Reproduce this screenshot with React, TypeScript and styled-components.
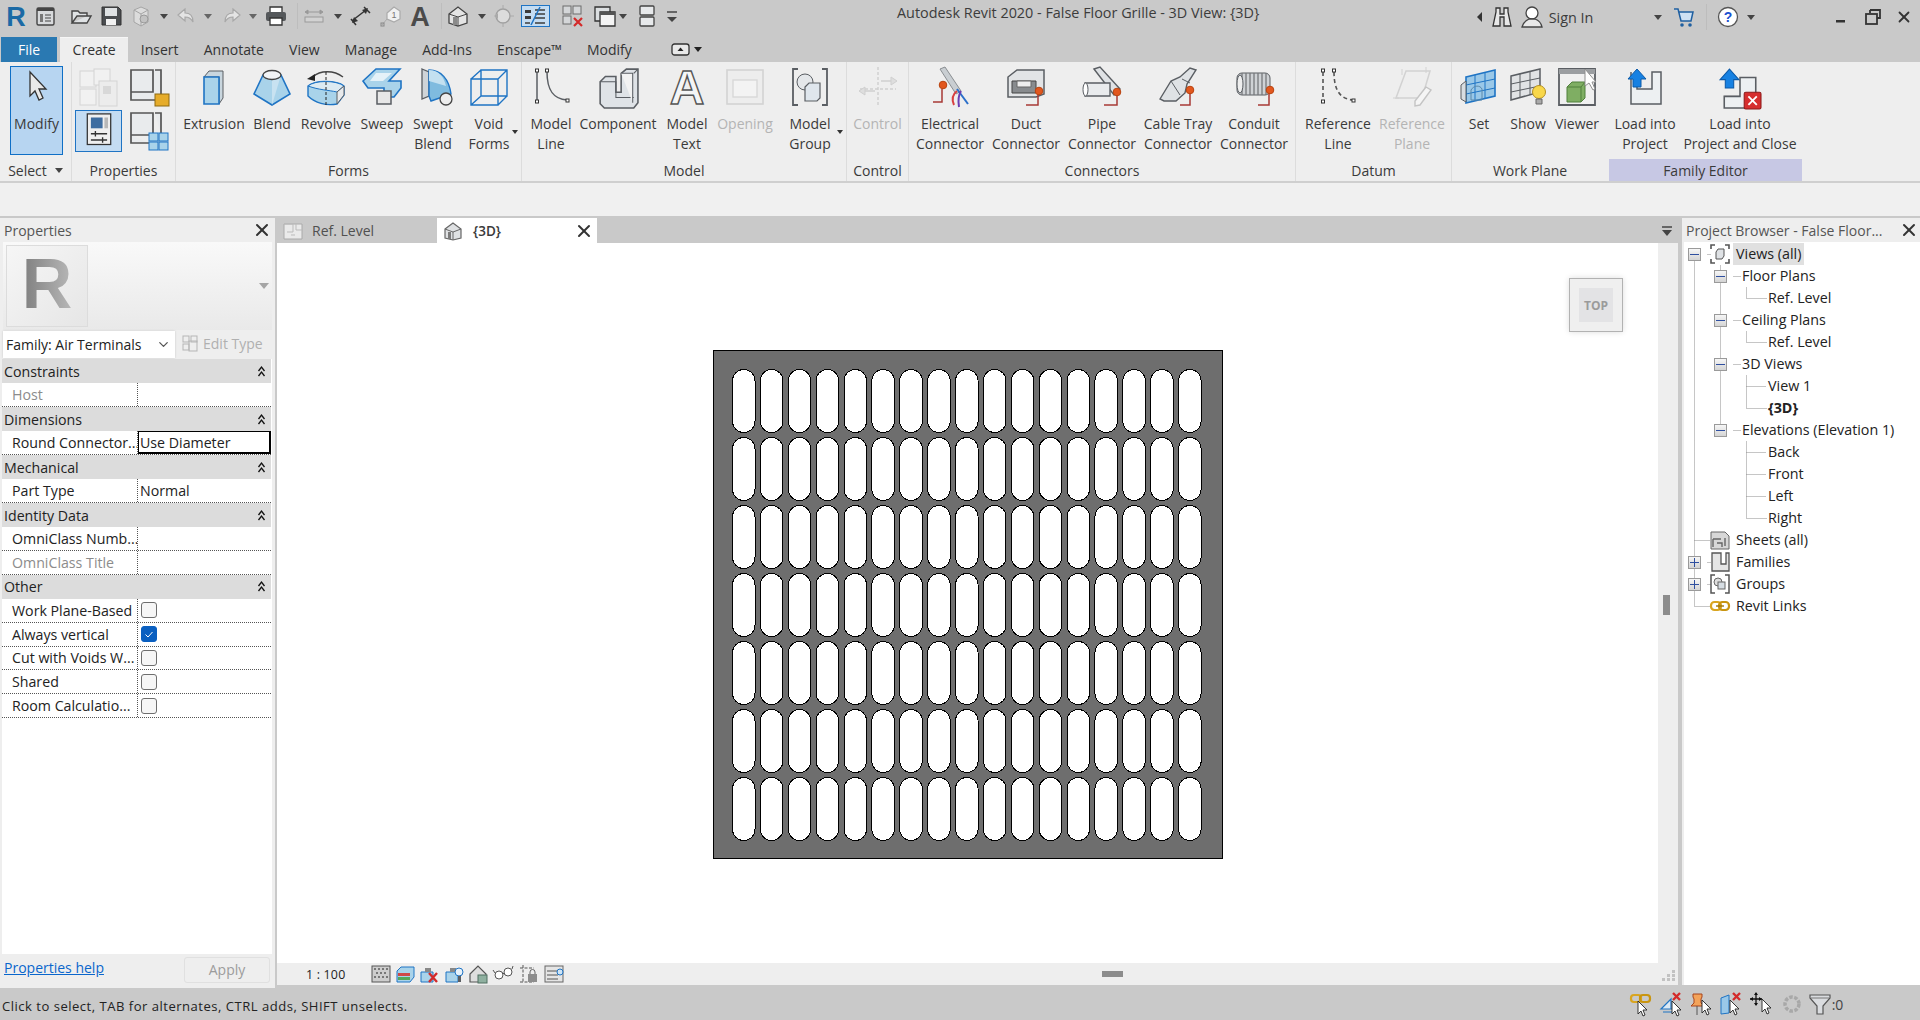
import React from "react";
import styled, { createGlobalStyle } from "styled-components";
import { ChevronDown, X } from "lucide-react";

const Global = createGlobalStyle`
  html, body { margin: 0; padding: 0; background: #c9c9c9; overflow: hidden; }
  * { box-sizing: border-box; }
  body { font-family: "Open Sans", "Noto Sans", "Liberation Sans", sans-serif; font-size: 14px; color: #2b2b2b; }
`;

/* ---------- page shell ---------- */
const Page = styled.div`width: 1920px; height: 1020px; display: flex; flex-direction: column; overflow: hidden; background: #c9c9c9;`;
const TitleBar = styled.header`height: 37px; display: flex; align-items: flex-start; flex: none; position: relative;`;
const IconRow = styled.div<{ $h?: number }>`display: flex; align-items: center; flex: none; height: ${p => p.$h ?? 32}px;`;
const Slot = styled.div<{ $w: number; $ml: number }>`width: ${p => p.$w}px; margin-left: ${p => p.$ml}px; flex: none; display: flex; align-items: center; justify-content: center;`;
const Title = styled.div`margin-left: 218px; font-size: 14.4px; line-height: 26px; color: #3c3c3c; white-space: nowrap;`;
const TitleRight = styled.div`margin-left: auto; width: 450px; flex: none; padding-top: 1px;`;
const SignIn = styled.span`font-size: 14.4px; color: #3c3c3c; white-space: nowrap;`;
const Divider = styled.div`width: 1px; height: 26px; background: #bdbdbd;`;
const TabRow = styled.nav`height: 25px; display: flex; flex: none; padding-left: 1px;`;
const FileTab = styled.div`width: 56px; margin-right: 3px; padding-bottom: 1px; background: #2a79b2; color: #fff; display: flex; align-items: center; justify-content: center;`;
const RibbonTab = styled.div<{ $active?: boolean }>`padding: 0 12.6px 2px; display: flex; align-items: center; color: #333; white-space: nowrap;
  background: ${p => (p.$active ? "#eeeeee" : "transparent")}; border-top: 1px solid ${p => (p.$active ? "#f6f6f6" : "transparent")};`;
const TabTool = styled.div`margin-left: 27px; display: flex; align-items: center; gap: 4px;`;

const Ribbon = styled.section`height: 121px; flex: none; display: flex; background: #eeeeee; border-bottom: 2px solid #cfcfcf;`;
const Panel = styled.div<{ $w: number; $last?: boolean }>`width: ${p => p.$w}px; flex: none; display: flex; flex-direction: column; height: 119px;
  border-right: 1px solid ${p => (p.$last ? "transparent" : "#dcdcdc")};`;
const PanelBody = styled.div<{ $pad?: number }>`height: 97px; display: flex; padding-left: ${p => p.$pad ?? 0}px;`;
const PanelLabel = styled.div<{ $hl?: boolean }>`height: 22px; display: flex; align-items: center; justify-content: center; gap: 8px; color: #3a3a3a; background: ${p => (p.$hl ? "#c7c8e4" : "transparent")};`;
const RButton = styled.div<{ $w: number; $off?: boolean }>`width: ${p => p.$w}px; flex: none; position: relative; display: flex; flex-direction: column; align-items: center; color: ${p => (p.$off ? "#b4b4b4" : "#3a3a3a")};`;
const IconWell = styled.div`height: 52px; padding-top: 5px; flex: none;`;
const RLabel = styled.div`line-height: 19.5px; text-align: center; white-space: nowrap;`;
const SplitCaret = styled.div<{ $r: number }>`position: absolute; top: 68px; right: ${p => p.$r}px; width: 0; height: 0; border: 3px solid transparent; border-top: 4px solid #333;`;
const ModifyButton = styled.div`width: 53px; height: 89px; margin: 4px 0 0 10px; background: #b7d5f1; border: 1px solid #0f6fc6; display: flex; flex-direction: column; align-items: center; padding-top: 4px; color: #3a3a3a;`;
const ModifyText = styled.div`margin-top: 13px;`;
const SmallGrid = styled.div`margin: 3px 0 0 3px; display: grid; grid-template-columns: 47px 47px; grid-template-rows: 45px 42px; gap: 0 3px;`;
const SmallCell = styled.div<{ $on?: boolean }>`display: flex; align-items: center; justify-content: center; background: ${p => (p.$on ? "#c4dcf2" : "transparent")}; border: 1px solid ${p => (p.$on ? "#1f74c4" : "transparent")};`;
const Caret = styled.span<{ $c?: string }>`display: inline-block; width: 0; height: 0; border: 4px solid transparent; border-top: 5px solid ${p => p.$c ?? "#444"}; border-bottom: 0;`;
const RibbonGap = styled.div`height: 33px; flex: none; background: #f0f0f0;`;

const Workspace = styled.main`flex: 1; min-height: 0; display: flex; padding-top: 2px; background: #c9c9c9;`;

/* ---------- properties ---------- */
const PropsPanel = styled.aside`width: 275px; flex: none; background: #eeeeee; display: flex; flex-direction: column; margin-right: 2px;`;
const DockHeader = styled.div<{ $pad: number }>`height: 24px; flex: none; display: flex; align-items: center; justify-content: space-between; padding: 0 ${p => p.$pad}px 0 4px; color: #555;`;
const TypeSelector = styled.div`height: 88px; margin: 0 3px 0 3px; flex: none; display: flex; align-items: center; justify-content: space-between; padding: 0 3px; background: linear-gradient(#f9f9f9, #e9e9e9);`;
const Thumb = styled.div`width: 82px; height: 82px; border: 1px solid #dcdcdc; background: linear-gradient(135deg, #f6f6f6, #e6e6e6); display: flex; align-items: center; justify-content: center;`;
const TypeCaret = styled.div`width: 0; height: 0; border: 5px solid transparent; border-top: 6px solid #a5a5a5; border-bottom: 0;`;
const FamilyRow = styled.div`height: 29px; flex: none; display: flex; align-items: center; padding: 0 0 0 3px;`;
const Combo = styled.div`width: 172px; height: 27px; background: #fff; box-shadow: 0 0 2px #c8c8c8; display: flex; align-items: center; justify-content: space-between; padding: 0 4px 0 3px; color: #222;`;
const EditType = styled.div`margin: -3px 0 0 7px; display: flex; align-items: center; gap: 5px; color: #b0b0b0;`;
const PropBody = styled.div`flex: 1; margin: 0 0 0 2px; background: #fff; width: 270px; font-size: 14.2px;`;
const GroupHead = styled.div`height: 24.2px; width: 269px; background: #dcdcdc; padding: 0 6px 0 2px; display: flex; align-items: center; justify-content: space-between; color: #222;`;
const PropRow = styled.div`height: 23.8px; width: 269px; display: grid; grid-template-columns: 136px 133px; border-bottom: 1px dotted #555;`;
const PropName = styled.div<{ $off?: boolean }>`padding-left: 10px; display: flex; align-items: center; white-space: nowrap; overflow: hidden; border-right: 1px dotted #555; color: ${p => (p.$off ? "#8c8c8c" : "#222")};`;
const PropValue = styled.div<{ $sel?: boolean }>`padding-left: ${p => (p.$sel ? 1 : 2)}px; display: flex; align-items: center; color: #222; border: ${p => (p.$sel ? "1px solid #000" : "0")}; ${p => (p.$sel ? "border-width: 1px 2px 2px 1px;" : "")}`;
const Check = styled.div<{ $on?: boolean }>`width: 16px; height: 16px; margin-left: 1px; border-radius: 3px; display: flex; align-items: center; justify-content: center;
  background: ${p => (p.$on ? "#0a5fc0" : "#f6f6f6")}; border: 1px solid ${p => (p.$on ? "#0a5fc0" : "#6e6e6e")};`;
const PropFooter = styled.div`height: 34px; flex: none; display: flex; align-items: center; justify-content: space-between; padding: 0 5px 0 4px;`;
const HelpLink = styled.a`color: #0a66cc; text-decoration: underline; margin-top: -7px;`;
const ApplyButton = styled.div`width: 86px; height: 26px; margin-top: -3px; border: 1px solid #e0e0e0; border-radius: 3px; display: flex; align-items: center; justify-content: center; color: #9c9c9c;`;

/* ---------- view ---------- */
const ViewArea = styled.section`width: 1401px; flex: none; display: flex; flex-direction: column; margin-bottom: 3px;`;
const ViewTabs = styled.div`height: 25px; flex: none; display: flex; align-items: stretch; background: #c9c9c9;`;
const ViewTab = styled.div<{ $active?: boolean; $w: number; $ml?: number }>`width: ${p => p.$w}px; margin-left: ${p => p.$ml ?? 0}px; display: flex; align-items: center; background: ${p => (p.$active ? "#fff" : "transparent")}; padding-left: 6px; color: ${p => (p.$active ? "#3a3a3a" : "#505050")};`;
const TabName = styled.span<{ $bold?: boolean }>`margin-left: ${p => (p.$bold ? 10 : 9)}px; font-weight: ${p => (p.$bold ? 600 : 400)}; font-size: ${p => (p.$bold ? 13.5 : 14)}px;`;
const TabClose = styled.div`margin-left: auto; margin-right: 3px; display: flex;`;
const TabsMenu = styled.div`margin-left: auto; margin-right: 5px; align-self: center; display: flex;`;
const ViewBody = styled.div`flex: 1; min-height: 0; display: flex;`;
const CanvasColumn = styled.div`flex: 1; min-width: 0; display: flex; flex-direction: column;`;
const Canvas = styled.div`flex: 1; position: relative; background: #fff; display: flex; justify-content: center; padding-top: 107px;`;
const ViewCube = styled.div`position: absolute; left: 1292px; top: 35px; width: 54px; height: 54px; border: 1px solid #b2b2b2; background: #efefef; box-shadow: 0 0 6px #dedede; display: flex; align-items: center; justify-content: center;`;
const CubeFace = styled.div`width: 34px; height: 34px; background: #e3e3e5; color: #9b9b9b; font-size: 12px; font-weight: 700; display: flex; align-items: center; justify-content: center;`;
const ViewBar = styled.div`height: 22px; flex: none; background: #eeeeee; position: relative; display: flex; align-items: center;`;
const ScaleText = styled.div`position: absolute; left: 29px; font-size: 12.4px; color: #222; white-space: nowrap; letter-spacing: 0.2px;`;
const HThumb = styled.div`margin-left: auto; margin-right: 535px; width: 21px; height: 6px; background: #8c8c8c;`;
const ScrollColumn = styled.div`width: 20px; flex: none; background: #eeeeee; display: flex; flex-direction: column; align-items: center; padding-bottom: 3px;`;
const VThumb = styled.div`margin: 352px 3px 0 0; width: 7px; height: 20px; background: #8c8c8c;`;
const Grip = styled.div`margin-top: auto; align-self: flex-end; margin-right: 3px; display: flex;`;

/* ---------- browser ---------- */
const BrowserPanel = styled.aside`width: 238px; margin-left: 4px; flex: none; background: #eeeeee; display: flex; flex-direction: column; margin-bottom: 3px;`;
const Tree = styled.div`flex: 1; margin-left: 2px; background: #fff; position: relative; padding-top: 1px; font-size: 14.3px;`;
const TreeLines = styled.svg`position: absolute; left: 0; top: 0;`;
const TreeRow = styled.div<{ $pad: number }>`height: 22px; display: flex; align-items: center; padding-left: ${p => p.$pad}px; position: relative; color: #222; white-space: nowrap;`;
const ExpBox = styled.div`width: 13px; height: 13px; flex: none; border: 1px solid #9a9a9a; background: linear-gradient(#f6f6f6, #d4d4d4); display: flex; align-items: center; justify-content: center;`;
const ExpSpace = styled.div`width: 13px; flex: none;`;
const TreeIcon = styled.div`margin: 0 3px 0 9px; flex: none; display: flex;`;
const TreeLabel = styled.span<{ $ml?: number; $hl?: boolean; $bold?: boolean }>`margin-left: ${p => p.$ml ?? 0}px; padding: 0 3px; line-height: 22px; background: ${p => (p.$hl ? "#e0e0e0" : "transparent")}; font-weight: ${p => (p.$bold ? 700 : 400)};`;

/* ---------- status ---------- */
const StatusBar = styled.footer`height: 32px; flex: none; display: flex; align-items: center; padding-left: 2px; color: #222; position: relative;`;
const StatusText = styled.div`font-size: 13.05px; letter-spacing: 0.5px; white-space: nowrap; margin-top: 3px;`;
const StatusRight = styled.div`position: absolute; left: 1620px; top: 0; display: flex; align-items: center; height: 32px;`;
const FilterCount = styled.span`margin-left: -1px; color: #444;`;

const Svg = styled.svg`display: block; flex: none; overflow: visible;`;
const I: React.FC<{ s?: number; v?: number; h?: number; children?: React.ReactNode }> = ({ s = 40, v = 40, h, children }) => (
  <Svg width={s} height={h ?? s} viewBox={`0 0 ${v} ${h ? (v * h) / s : v}`}>{children}</Svg>
);

type Item = { c: number; w: number; n: React.ReactNode };
const spaced = (items: Item[], start = 0) => {
  let right = start;
  return items.map((it, i) => {
    const ml = it.c - it.w / 2 - right;
    right = it.c + it.w / 2;
    return <Slot key={i} $w={it.w} $ml={ml}>{it.n}</Slot>;
  });
};

const BL = "#1f74c4", BF = "#a9d3ea", GS = "#5a5e63", GF = "#dfe3e7";

/* ---------- ribbon icons ---------- */
const Extrusion = () => <I><path d="M10 10l5-6h14v27l-4 6V10z" fill="#c9d6de" stroke={GS} /><path d="M10 10h15v27H10z" fill={BF} stroke={BL} strokeWidth="1.6" /></I>;
const Blend = () => <I><path d="M11 8L2 27l18 11 18-11L29 8z" fill={BF} stroke={BL} strokeWidth="1.6" /><path d="M20 13v25L29 8z" fill="#c8e2f1" /><ellipse cx="20" cy="8" rx="9" ry="4.5" fill="#f1f3f5" stroke="#444" strokeWidth="1.3" /></I>;
const Revolve = () => <I><path d="M7 10C14 3 28 3 37 10" fill="none" stroke="#444" strokeWidth="1.3" /><path d="M1 12l8-5v7z" fill="#222" /><path d="M2 19c7-6 28-6 36 0v9l-7 9c-11 2-22-1-29-8z" fill={BF} stroke={BL} strokeWidth="1.4" /><path d="M2 19c7-6 28-6 36 0l-7 6c-9-2-18-2-29-6z" fill="#dceaf2" stroke={BL} /><path d="M31 25v12l7-9v-9z" fill="#e8eaec" stroke={GS} /><path d="M20 5v34" stroke="#222" strokeDasharray="3 2" /></I>;
const Sweep = () => <I><path d="M14 2h24l-11 12h12v7l-7 9H22v-9H6L1 14z" fill={BF} stroke={BL} strokeWidth="1.6" /><path d="M14 6h16l-9 8H8z" fill="#e4f1f8" /><path d="M15 24h14v13H15z" fill="#e7e7e7" stroke={GS} strokeWidth="1.5" /></I>;
const SweptBlend = () => <I><path d="M9 2l7 3v24L9 32z" fill="#cfd4d8" stroke={GS} strokeWidth="1.3" /><path d="M16 3c12 0 20 9 22 24L18 34l-2-5z" fill="#7fbbdf" stroke={BL} strokeWidth="1.4" /><path d="M16 3c10 0 15 7 17 16L16 14z" fill="#c3e0f0" /><circle cx="33" cy="32" r="6" fill="#ededed" stroke="#444" strokeWidth="1.3" /></I>;
const VoidForms = () => <I><path d="M12 3h26v26H12zM2 12h27v26H2zM2 12L12 3M29 12L38 3M2 38l10-9M29 38l9-9" fill="none" stroke={BL} strokeWidth="1.4" /></I>;
const ModelLine = () => <I><path d="M6 5v28" stroke={GS} strokeWidth="1.5" /><path d="M16 5c0 18 6 27 20 28" stroke={GS} strokeWidth="1.5" fill="none" /><g fill="#fff" stroke="#333"><rect x="4.5" y="2" width="3" height="3" /><rect x="4.5" y="33" width="3" height="3" /><rect x="14.5" y="2" width="3" height="3" /><rect x="35" y="32" width="3" height="3" /></g></I>;
const Component = () => <I s={42}><path d="M3 14l5-5h10v15h5V6l5-4h11v32l-4 5H7l-4-4z" fill={GF} stroke={GS} strokeWidth="1.5" /><path d="M3 14h15v15h17l-1 0" fill="none" stroke={GS} /><path d="M23 6h11v28" fill="#f2f2f2" stroke={GS} /><path d="M35 6l4-4" stroke={GS} /></I>;
const ModelText = () => <I><text x="20" y="37" textAnchor="middle" fontFamily="Liberation Sans" fontWeight="700" fontSize="48" fill="#f4f5f6" stroke="#555" strokeWidth="1.4">A</text></I>;
const Opening = () => <I><rect x="2" y="3" width="36" height="34" fill="#ededed" stroke="#d3d3d3" strokeWidth="1.6" /><rect x="8" y="13" width="24" height="17" fill="#f3f3f3" stroke="#d8d8d8" strokeWidth="1.4" /></I>;
const ModelGroup = () => <I><path d="M8 2H3v36h5M32 2h5v36h-5" fill="none" stroke={GS} strokeWidth="1.8" /><circle cx="15" cy="15" r="8" fill="#e4e7ea" stroke={GS} /><path d="M15 20l4-4h11v15l-3 3H15z" fill="#dfe6ed" stroke={GS} strokeWidth="1.2" /></I>;
const ControlI = () => <I><path d="M20 0v40M2 22h36" stroke="#cfcfcf" strokeDasharray="3 2" strokeWidth="1.4" /><path d="M1 24l6-4v8zM39 14l-6-4v8z" fill="#dedede" stroke="#cfcfcf" /><path d="M7 24h10M23 14h10" stroke="#cfcfcf" strokeWidth="1.5" /></I>;
const Elbow = ({ d }: { d: string }) => <path d={d} fill="none" stroke="#a83a36" strokeWidth="1.5" />;
const Dot = ({ x, y }: { x: number; y: number }) => <circle cx={x} cy={y} r="3.8" fill="#e2571e" stroke="#b8430f" />;
const Electrical = () => <I><path d="M10 2l5-2 16 24-5 3z" fill="#c9ced2" stroke="#8a8e92" /><path d="M27 22l11 15" stroke="#2b6fc9" strokeWidth="2" fill="none" /><path d="M27 24c-4 3-6 7-3 14" stroke="#d84040" strokeWidth="2" fill="none" /><path d="M31 24c-3 5-3 10-2 16" stroke="#6a3fb4" strokeWidth="2" fill="none" /><Elbow d="M3 35h9V22" /><Dot x={13} y={18} /></I>;
const Duct = () => <I><path d="M2 10L11 3h27v24l-8 3H2z" fill="#e2e4e6" stroke={GS} strokeWidth="1.5" /><path d="M6 14h24v12H6z" fill="#888b8e" stroke="#444" /><path d="M11 14h14v6H11z" fill="#eee" stroke="#666" /><Elbow d="M20 38h12V27" /><Dot x={33} y={24} /></I>;
const Pipe = () => <I><path d="M12 2l6-2 20 22-6 6z" fill="#dfe2e5" stroke={GS} strokeWidth="1.4" /><path d="M3 16h25v13H3z" fill="#e9ebed" stroke={GS} strokeWidth="1.4" /><ellipse cx="3.5" cy="22.5" rx="2.5" ry="6.5" fill="#fff" stroke={GS} /><Elbow d="M22 38h13V28" /><Dot x={35} y={25} /></I>;
const CableTray = () => <I><path d="M2 32l11-18 9-4 10-9 6 2-9 14-2 9-9 8H6z" fill="#dfe2e5" stroke={GS} strokeWidth="1.4" /><path d="M13 14l9 14M24 12l8 4" stroke={GS} fill="none" /><Elbow d="M22 38h10V26" /><Dot x={32} y={23} /></I>;
const Conduit = () => <I><rect x="3" y="6" width="33" height="22" rx="5" fill="#cfd2d5" stroke={GS} /><path d="M8 6v22M12 6v22M16 6v22M20 6v22M24 6v22M28 6v22M32 6v22" stroke="#77797c" strokeWidth="1.3" /><ellipse cx="6" cy="17" rx="3" ry="9" fill="#eee" stroke={GS} /><Elbow d="M24 38h11V26" /><Dot x={36} y={23} /></I>;
const RefLine = () => <I><path d="M5 5v28" stroke="#555" strokeWidth="1.6" strokeDasharray="4 3" /><path d="M16 5c0 18 6 27 19 28" stroke="#555" strokeWidth="1.6" strokeDasharray="4 3" fill="none" /><g fill="#fff" stroke="#333"><rect x="3.5" y="2" width="3" height="3" /><rect x="3.5" y="33" width="3" height="3" /><rect x="14.5" y="2" width="3" height="3" /><rect x="34" y="32" width="3" height="3" /></g></I>;
const RefPlane = () => <I><path d="M14 4h24l-8 27H4z" fill="#eeeeee" stroke="#d2d2d2" strokeWidth="1.5" /><path d="M10 2v6M34 0v6M1 31h6" stroke="#d2d2d2" /><path d="M34 20l5 3-11 15-5 1 0-5z" fill="#f5f5f5" stroke="#c4c4c4" strokeWidth="1.4" /></I>;
const SetWP = () => <I><path d="M7 10L36 3v26L7 36z" fill="#9ac8e8" stroke={BL} strokeWidth="1.6" /><path d="M16 8v26M26 5v26M7 18l29-6M7 27l29-6" stroke={BL} /><path d="M2 18l5-4v21l-5-3z" fill="#d8dde1" stroke={GS} /><path d="M12 23c3-5 9-5 11-1v11H12z" fill="none" stroke="#5a88aa" /></I>;
const ShowWP = () => <I><path d="M3 9L32 2v23L3 33z" fill="#e1e3e5" stroke={GS} strokeWidth="1.5" /><path d="M12 7v24M22 4v24M3 17l29-6M3 25l29-6" stroke={GS} /><circle cx="31" cy="25" r="6.5" fill="#f8d74a" stroke="#b48f22" /><path d="M28 32h6v5h-6z" fill="#aaa" stroke="#666" /></I>;
const Viewer = () => <I><path d="M2 2h36v36H2z" fill="#f0f0f0" stroke={GS} strokeWidth="1.8" /><path d="M2 2h36v5H2z" fill="#9b9ea1" /><path d="M10 20l5-5h13v16l-4 4H10z" fill="#7fae63" stroke="#51803d" /><path d="M10 20h14v15M24 20l4-5" fill="none" stroke="#51803d" /><path d="M28 2l11 13h-4l3 7-2 1-4-7-4 3z" fill="#fff" stroke="#8f8f8f" /></I>;
const BlueUp = ({ x = 0 }: { x?: number }) => <path transform={`translate(${x} 0)`} d="M10 2l9 10h-5v8H6v-8H1z" fill="#1781e2" stroke="#0d5aa8" />;
const LoadProject = () => <I><path d="M6 8v5h6v12h15V8h9v32H6z" transform="translate(0 -3)" fill="#edf0f2" stroke={GS} strokeWidth="1.5" /><BlueUp x={2} /></I>;
const LoadClose = () => <I s={42}><path d="M20 10h15v19h-6v10H5V28h15z" fill="#edf0f2" stroke={GS} strokeWidth="1.5" /><path d="M5 28h15" stroke={GS} /><BlueUp x={0} /><rect x="24" y="24" width="16" height="16" rx="1.5" fill="#d62e2e" stroke="#8e1a1a" /><path d="M28 28l8 8M36 28l-8 8" stroke="#fff" strokeWidth="1.8" /></I>;
const CursorBig = () => <I s={30} v={30}><path d="M8 1l16 17h-7l4 9-4 2-4-9-5 5z" fill="#e9e9e9" stroke="#333" strokeWidth="1.3" /></I>;
const PropsA = () => <I s={40}><g fill="#f1f1f1" stroke="#d4d4d4"><rect x="1" y="3" width="16" height="16" /><rect x="15" y="1" width="16" height="16" /><rect x="1" y="21" width="16" height="16" /><rect x="20" y="13" width="18" height="25" fill="#ececec" /></g><rect x="24" y="18" width="8" height="8" fill="#d8d8d8" /></I>;
const FamType = () => <I s={40}><path d="M2 2h22v22H2zM26 2h6v30H2v-8" fill="#e9ebed" stroke="#555" strokeWidth="1.7" /><rect x="26" y="26" width="14" height="12" fill="#e6ac2a" stroke="#8f6a10" /></I>;
const PropDoc = () => <I s={36}><rect x="7" y="1" width="26" height="34" fill="#efefef" stroke="#333" strokeWidth="1.4" /><rect x="11" y="5" width="13" height="12" fill="#3e6da0" /><rect x="26" y="5" width="4" height="12" fill="#b8b8b8" /><path d="M11 23h18M11 30h18" stroke="#333" strokeWidth="1.5" /><path d="M16 20v6M24 27v6" stroke="#333" strokeWidth="1.5" /></I>;
const FamCat = () => <I s={40}><path d="M2 2h22v22H2zM26 2h6v22M2 24v8h18" fill="#e9ebed" stroke="#555" strokeWidth="1.7" /><g fill="#a9d3ea" stroke={BL}><rect x="20" y="22" width="9" height="8" /><rect x="30" y="22" width="9" height="8" /><rect x="20" y="31" width="9" height="8" /><rect x="30" y="31" width="9" height="8" /></g></I>;

/* ---------- quick access ---------- */
const RLogo = () => <I s={24} v={24}><text x="11" y="22" textAnchor="middle" fontFamily="Liberation Sans" fontWeight="700" fontSize="27" fill="#1b6aa5">R</text></I>;
const QDoc = () => <I s={22} v={22}><rect x="2" y="3" width="17" height="17" rx="1.5" fill="#d8dadc" stroke="#444" strokeWidth="1.4" /><path d="M2 3h17v3H2z" fill="#444" /><path d="M5 9h3v8H5z" fill="#777" /><path d="M10 10h6M10 13h6M10 16h6" stroke="#444" /></I>;
const QOpen = () => <I s={22} v={22}><path d="M2 18V6h6l2 2h7v3H7l-5 7h15l4-7h-4" fill="#dfe2e4" stroke="#444" strokeWidth="1.4" /></I>;
const QSave = () => <I s={22} v={22}><path d="M2 2h16l3 3v15H2z" fill="#4a4d50" stroke="#333" /><rect x="5" y="3" width="12" height="8" fill="#dfe2e4" /><rect x="6" y="14" width="10" height="6" fill="#f2f2f2" /></I>;
const QSync = () => <I s={22} v={22}><path d="M4 5l7-3 7 3v12l-7 4-7-4z" fill="#dcdcdc" stroke="#a5a5a5" /><path d="M4 5l7 4 7-4M11 9v12" stroke="#a5a5a5" fill="none" /><circle cx="14" cy="14" r="4" fill="#c2c2c2" stroke="#9b9b9b" /></I>;
const QUndo = () => <I s={20} v={20}><path d="M8 3L1 9l7 6v-4c4 0 6 1 8 5 0-6-3-9-8-9z" fill="#e4e4e4" stroke="#a8a8a8" strokeWidth="1.2" /></I>;
const QRedo = () => <I s={20} v={20}><path d="M12 3l7 6-7 6v-4c-4 0-6 1-8 5 0-6 3-9 8-9z" fill="#e4e4e4" stroke="#a8a8a8" strokeWidth="1.2" /></I>;
const QPrint = () => <I s={22} v={22}><path d="M5 2h12v6H5z" fill="#fff" stroke="#333" strokeWidth="1.3" /><rect x="1" y="7" width="20" height="9" rx="2" fill="#55585b" /><path d="M5 13h12v7H5z" fill="#fff" stroke="#333" strokeWidth="1.3" /></I>;
const QThin = () => <I s={22} v={22}><path d="M2 7l3-2v4zM20 7l-3-2v4zM5 7h12" fill="#999" stroke="#999" /><rect x="2" y="12" width="18" height="5" fill="#d2d2d2" stroke="#9a9a9a" /></I>;
const QDim = () => <I s={22} v={22}><path d="M4 15L17 5M2 14l5 6M15 2l6 6" stroke="#333" strokeWidth="1.5" /><path d="M3 18l2-6 4 4zM19 3l-2 6-4-4z" fill="#333" /></I>;
const QTag = () => <I s={22} v={22}><path d="M8 8l7-6 6 4v8l-6 3-7-3z" fill="#f1f1f1" stroke="#aaa" strokeWidth="1.2" /><text x="15" y="13" textAnchor="middle" fontSize="9" fontFamily="Liberation Sans" fill="#777">1</text><path d="M8 14L3 20" stroke="#aaa" /><rect x="2" y="18" width="3" height="3" fill="none" stroke="#888" /></I>;
const QA = () => <I s={24} v={24}><text x="12" y="22" textAnchor="middle" fontSize="27" fontWeight="700" fontFamily="Liberation Sans" fill="#4b4b4b">A</text></I>;
const QHouse = () => <I s={22} v={22}><path d="M2 9l9-7 9 7v9l-9 3-9-3z" fill="#e4e4e4" stroke="#444" strokeWidth="1.3" /><path d="M2 9l9 3 9-3M11 12v9" stroke="#444" fill="none" /><path d="M6 12h4v8H6z" fill="#8a8a8a" /></I>;
const QLook = () => <I s={22} v={22}><circle cx="11" cy="11" r="7" fill="#dcdcdc" stroke="#a0a0a0" strokeWidth="1.3" /><path d="M11 0v4M11 18v4M18 11h4" stroke="#aaa" /><path d="M2 11l4-3v6z" fill="#aaa" /></I>;
const QActive = () => <svg width="29" height="22" viewBox="0 0 29 22"><rect x=".5" y=".5" width="28" height="21" fill="#c4dcf2" stroke="#1f74c4" /><path d="M4 5h6v3H4zM4 11h6v3H4z" fill="#3c3c3c" /><path d="M14 5h10M14 9h10M14 13h10M4 18h5M14 18h10" stroke="#3c3c3c" strokeWidth="1.3" /><path d="M10 20L19 2" stroke="#1f74c4" strokeWidth="1.6" /></svg>;
const QHidden = () => <I s={24} v={24}><g fill="#d4d6d8" stroke="#6c6c6c"><rect x="2" y="2" width="8" height="8" /><rect x="12" y="2" width="8" height="8" /><rect x="2" y="12" width="8" height="8" /></g><path d="M13 14l8 8M21 14l-8 8" stroke="#d32a2a" strokeWidth="2.2" /></I>;
const QSwitch = () => <I s={24} v={24}><path d="M2 3h15v14H2z" fill="#dcdfe1" stroke="#333" strokeWidth="1.3" /><path d="M7 8h15v14H7z" fill="#f4f4f4" stroke="#333" strokeWidth="1.3" /><path d="M7 8h15v3H7z" fill="#555" /></I>;
const QTile = () => <I s={22} v={22}><rect x="4" y="1" width="14" height="9" rx="1" fill="#e7e9eb" stroke="#444" strokeWidth="1.3" /><rect x="4" y="12" width="14" height="9" rx="1" fill="#e7e9eb" stroke="#444" strokeWidth="1.3" /></I>;
const QCust = () => <I s={14} v={14}><path d="M2 3h10" stroke="#444" strokeWidth="1.5" /><path d="M2 8h10l-5 5z" fill="#444" /></I>;
const RibbonMini = () => <svg width="19" height="13" viewBox="0 0 19 13"><rect x="1" y="1" width="17" height="11" rx="2.5" fill="#e9e9e9" stroke="#333" strokeWidth="1.3" /><path d="M6.5 8l3-3.5 3 3.5z" fill="#222" /></svg>;

const qat: Item[] = [
  { c: 17, w: 24, n: <RLogo /> }, { c: 46, w: 22, n: <QDoc /> }, { c: 81, w: 22, n: <QOpen /> }, { c: 111, w: 22, n: <QSave /> },
  { c: 141, w: 22, n: <QSync /> }, { c: 164, w: 8, n: <Caret /> }, { c: 187, w: 20, n: <QUndo /> }, { c: 208, w: 8, n: <Caret $c="#666" /> },
  { c: 231, w: 20, n: <QRedo /> }, { c: 253, w: 8, n: <Caret $c="#666" /> }, { c: 276, w: 22, n: <QPrint /> }, { c: 297, w: 1, n: <Divider /> },
  { c: 314, w: 22, n: <QThin /> }, { c: 338, w: 8, n: <Caret /> }, { c: 360, w: 22, n: <QDim /> }, { c: 390, w: 22, n: <QTag /> },
  { c: 420, w: 24, n: <QA /> }, { c: 441, w: 1, n: <Divider /> }, { c: 458, w: 22, n: <QHouse /> }, { c: 482, w: 8, n: <Caret /> },
  { c: 503, w: 22, n: <QLook /> }, { c: 535, w: 29, n: <QActive /> }, { c: 573, w: 24, n: <QHidden /> }, { c: 605, w: 24, n: <QSwitch /> },
  { c: 623, w: 8, n: <Caret /> }, { c: 647, w: 22, n: <QTile /> }, { c: 672, w: 14, n: <QCust /> },
];

const Binoc = () => <I s={22} v={22}><path d="M5 2h4v6h4V2h4v4l3 14h-7V11H9v9H2L5 6z" fill="#e8e8e8" stroke="#333" strokeWidth="1.3" /></I>;
const User = () => <I s={24} v={24}><circle cx="12" cy="8" r="6" fill="#fff" stroke="#444" strokeWidth="1.3" /><path d="M2 22c1-5 5-7 7-8h6c3 1 6 3 7 8z" fill="#e8e8e8" stroke="#444" strokeWidth="1.3" /></I>;
const Cart = () => <I s={22} v={22}><path d="M1 3h4l3 12h10l2-9H6" fill="#cfe1f3" stroke="#1f5fa0" strokeWidth="1.5" /><circle cx="9" cy="19" r="1.8" fill="#1f5fa0" /><circle cx="17" cy="19" r="1.8" fill="#1f5fa0" /></I>;
const Help = () => <I s={22} v={22}><circle cx="11" cy="11" r="9.5" fill="#fff" stroke="#555" strokeWidth="1.3" /><text x="11" y="16" textAnchor="middle" fontFamily="Liberation Sans" fontWeight="700" fontSize="14" fill="#1b4fd0">?</text></I>;
const WinMin = () => <I s={14} v={14}><rect x="2" y="10" width="9" height="2.5" fill="#333" /></I>;
const WinMax = () => <I s={16} v={16}><path d="M5 1h10v8h-3M5 1v3" fill="none" stroke="#333" strokeWidth="1.8" /><rect x="1" y="5" width="11" height="10" fill="none" stroke="#333" strokeWidth="1.8" /></I>;
const WinClose = () => <X size={18} strokeWidth={2.4} color="#333" />;
const Tri = () => <svg width="5" height="10" viewBox="0 0 5 10"><path d="M5 0v10L0 5z" fill="#333" /></svg>;

const rightBar: Item[] = [
  { c: 1479, w: 5, n: <Tri /> }, { c: 1502, w: 22, n: <Binoc /> }, { c: 1532, w: 24, n: <User /> },
  { c: 1571, w: 48, n: <SignIn>Sign In</SignIn> }, { c: 1658, w: 8, n: <Caret /> }, { c: 1684, w: 22, n: <Cart /> },
  { c: 1706, w: 1, n: <Divider /> }, { c: 1728, w: 22, n: <Help /> }, { c: 1751, w: 8, n: <Caret /> },
  { c: 1841, w: 14, n: <WinMin /> }, { c: 1873, w: 16, n: <WinMax /> }, { c: 1904, w: 18, n: <WinClose /> },
];

/* ---------- properties data ---------- */
const DoubleUp = () => <I s={7} v={7} h={11}><path d="M.5 5l3-4 3 4M.5 10l3-4 3 4" fill="none" stroke="#111" strokeWidth="1.3" /></I>;
const CheckMark = () => <I s={12} v={12}><path d="M2.5 6.5l2.5 2.5 4.5-5" fill="none" stroke="#fff" strokeWidth="1" /></I>;
const EditIcon = () => <I s={16} v={16}><g fill="none" stroke="#b5b5b5"><rect x="1" y="1" width="6" height="6" /><rect x="9" y="1" width="6" height="6" /><rect x="1" y="9" width="6" height="6" /><rect x="7" y="6" width="8" height="10" /></g></I>;
const ThumbR = () => <I s={60} v={60}><defs><linearGradient id="rg" x1="0" x2="1"><stop offset="0" stopColor="#7e7e7e" /><stop offset="1" stopColor="#b8b8b8" /></linearGradient></defs><text x="30" y="52" textAnchor="middle" fontFamily="Liberation Sans" fontWeight="700" fontSize="70" fill="url(#rg)">R</text></I>;
const DockClose = () => <X size={20} strokeWidth={2.4} color="#333" />;

type Pr = { name: string; value?: string; off?: boolean; sel?: boolean; check?: boolean };
const groups: { head: string; rows: Pr[] }[] = [
  { head: "Constraints", rows: [{ name: "Host", off: true }] },
  { head: "Dimensions", rows: [{ name: "Round Connector...", value: "Use Diameter", sel: true }] },
  { head: "Mechanical", rows: [{ name: "Part Type", value: "Normal" }] },
  { head: "Identity Data", rows: [{ name: "OmniClass Numb..." }, { name: "OmniClass Title", off: true }] },
  { head: "Other", rows: [
    { name: "Work Plane-Based", check: false }, { name: "Always vertical", check: true },
    { name: "Cut with Voids W...", check: false }, { name: "Shared", check: false }, { name: "Room Calculatio...", check: false },
  ] },
];

/* ---------- view icons ---------- */
const PlanTab = () => <I s={20} v={20}><path d="M1 3h18v15H1z" fill="#eaeaea" stroke="#aaa" /><path d="M1 3h9v8H4M13 3v6h6M8 14h4" fill="none" stroke="#bbb" /></I>;
const HouseTab = () => <I s={20} v={20}><path d="M2 8l8-6 8 6v9l-8 2-8-2z" fill="#dfe1e3" stroke="#666" strokeWidth="1.2" /><path d="M2 8l8 3 8-3M10 11v8" fill="none" stroke="#666" /><path d="M5 11h3v7H5z" fill="#7b7b7b" /></I>;

const Grille = () => {
  const slots: React.ReactNode[] = [];
  for (let r = 0; r < 7; r++) for (let c = 0; c < 17; c++)
    slots.push(<rect key={`${r}-${c}`} x={19.5 + c * 27.88} y={19.5 + r * 68} width={22.5} height={63} rx={11.25} fill="#fff" stroke="#000" strokeWidth="1" />);
  return <Svg width="510" height="509" viewBox="0 0 510 509" shapeRendering="crispEdges"><rect x=".5" y=".5" width="509" height="508" fill="#6e6e6e" stroke="#000" strokeWidth="1" />{slots}</Svg>;
};

const VHatch = () => <I s={20} v={20}><rect x="1" y="2" width="18" height="16" fill="#cdcdcd" stroke="#555" /><path d="M3 4h2v2H3zM7 4h2v2H7zM11 4h2v2h-2zM15 4h2v2h-2zM5 8h2v2H5zM9 8h2v2H9zM13 8h2v2h-2zM3 12h2v2H3zM7 12h2v2H7zM11 12h2v2h-2zM15 12h2v2h-2z" fill="#777" /></I>;
const VBox = () => <I s={20} v={20}><path d="M2 7l4-4h13v10l-4 5H2z" fill="#a9d3ea" stroke={BL} /><path d="M3 9h12v3H3z" fill="#d04848" /><path d="M3 13h12v3H3z" fill="#55a85a" /></I>;
const VLayer = ({ red }: { red?: boolean }) => <I s={20} v={20}><path d="M2 8h12v10H2z" fill="#a9d3ea" stroke={BL} /><path d="M6 4h6v4H6z" fill="#888" />{red ? <path d="M10 9l8 9M18 9l-8 9" stroke="#d32a2a" strokeWidth="2.4" /> : <><circle cx="15" cy="8" r="4" fill="#e8f2fa" stroke={BL} /><path d="M14 12h3v6h-3z" fill="#5a5e63" /></>}</I>;
const VLock = () => <I s={20} v={20}><path d="M2 10l8-8 8 8v8H2z" fill="#dedede" stroke="#555" strokeWidth="1.2" /><rect x="10" y="11" width="9" height="8" fill="#8fb0a0" stroke="#4f6f60" /></I>;
const VGlasses = () => <I s={20} v={20}><circle cx="6" cy="11" r="4" fill="#fff" stroke="#555" /><circle cx="15" cy="8" r="4" fill="#fff" stroke="#555" /><path d="M9 9l3 1" stroke="#555" /><path d="M2 9l-2-3M19 5l1-3" stroke="#555" /></I>;
const VCrop = () => <I s={20} v={20}><path d="M1 4h14M1 18h14M4 1v18" stroke="#555" strokeDasharray="3 1.5" fill="none" /><rect x="9" y="10" width="9" height="8" fill="#8d8d8d" /><path d="M11 10V8a2.5 2.5 0 015 0v2" fill="none" stroke="#666" /></I>;
const VShow = () => <I s={20} v={20}><rect x="1" y="2" width="18" height="16" fill="#e5e5e5" stroke="#666" /><path d="M3 7h11M3 11h11M3 15h11" stroke="#555" /><circle cx="16" cy="8" r="3" fill="#cfe4f5" stroke={BL} /></I>;
const bar: Item[] = [
  { c: 381, w: 20, n: <VHatch /> }, { c: 405, w: 20, n: <VBox /> }, { c: 429, w: 20, n: <VLayer red /> }, { c: 454, w: 20, n: <VLayer /> },
  { c: 478, w: 20, n: <VLock /> }, { c: 503, w: 20, n: <VGlasses /> }, { c: 529, w: 20, n: <VCrop /> }, { c: 554, w: 20, n: <VShow /> },
].map(b => ({ ...b, c: b.c - 277 }));
const GripDots = () => <I s={13} v={13}><path d="M10 1h3v3h-3zM5 5h3v3H5zM10 5h3v3h-3zM0 9h3v3H0zM5 9h3v3H5zM10 9h3v3h-3z" fill="#c2c2c2" /></I>;

/* ---------- tree ---------- */
const MinusI = () => <svg width="9" height="1"><rect width="9" height="1" fill="#2f4fa0" /></svg>;
const PlusI = () => <svg width="9" height="9" viewBox="0 0 9 9"><path d="M0 4h9v1H0zM4 0h1v9H4z" fill="#2f4fa0" /></svg>;
const TViews = () => <I s={20} v={20}><path d="M1 5V1h4M15 1h4v4M19 15v4h-4M5 19H1v-4" fill="none" stroke="#555" strokeWidth="1.6" /><path d="M6 8l2-3h6v7l-2 3H6z" fill="#dfe2e5" stroke="#555" /></I>;
const TSheets = () => <I s={20} v={20}><path d="M1 2h14l4 4v13H1z" fill="#d7d7d7" stroke="#666" /><path d="M3 9h8M3 9v8M7 13h5v4M15 8v8" fill="none" stroke="#666" strokeWidth="1.4" /></I>;
const TFamilies = () => <I s={20} v={20}><path d="M2 1h9v11h5V1h3v18H2z" fill="#e5e5e5" stroke="#555" strokeWidth="1.3" /></I>;
const TGroups = () => <I s={20} v={20}><path d="M5 1H1v18h4M15 1h4v18h-4" fill="none" stroke="#555" strokeWidth="1.5" /><circle cx="8" cy="8" r="4" fill="#dedede" stroke="#666" /><rect x="8" y="8" width="7" height="7" fill="#d6dde3" stroke="#666" /></I>;
const TLinks = () => <I s={20} v={20} h={12}><rect x="1" y="2" width="10" height="8" rx="3.5" fill="none" stroke="#d9a520" strokeWidth="2.2" /><rect x="9" y="2" width="10" height="8" rx="3.5" fill="none" stroke="#c99510" strokeWidth="2.2" /><path d="M6 6h8" stroke="#9a7410" strokeWidth="1.4" /></I>;

const treeLines = "M10 11V363 M23 11H26 M10 297H26 M23 319H26 M23 341H26 M10 363H26 M36 22V187 M49 33H56 M49 77H56 M49 121H56 M49 187H56 M62 44V55H82 M62 88V99H82 M62 132V165H82 M62 143H82 M62 198V275H82 M62 209H82 M62 231H82 M62 253H82";

/* ---------- status icons ---------- */
const MiniCursor = ({ x = 10, y = 8 }: { x?: number; y?: number }) => <path transform={`translate(${x} ${y})`} d="M0 0l9 9H5l2 5-2 1-2-5-3 3z" fill="#fff" stroke="#222" strokeWidth=".9" />;
const SLinks = () => <I s={24} v={24}><rect x="1" y="3" width="10" height="7" rx="3" fill="none" stroke="#d9a520" strokeWidth="2.2" /><rect x="10" y="3" width="10" height="7" rx="3" fill="none" stroke="#c99510" strokeWidth="2.2" /><MiniCursor x={8} y={9} /></I>;
const SLayer = () => <I s={24} v={24}><path d="M1 17L11 7v10zM1 17h11M3 20h10" fill="#dbe9f5" stroke={BL} strokeWidth="1.2" /><path d="M13 1l7 7M20 1l-7 7" stroke="#d32a2a" strokeWidth="2.4" /><MiniCursor x={12} y={9} /></I>;
const SPin = () => <I s={24} v={24}><path d="M3 2h9v3l-1 2v4l3 3H1l3-3V7L3 5z" fill="#f3a35a" stroke="#a8441d" /><path d="M7 14v9" stroke="#555" /><MiniCursor x={12} y={8} /></I>;
const SFace = () => <I s={24} v={24}><path d="M1 6l8-3v18l-8 1z" fill="#9ac8e8" stroke={BL} /><path d="M13 1l7 7M20 1l-7 7" stroke="#d32a2a" strokeWidth="2.4" /><MiniCursor x={10} y={8} /></I>;
const SMove = () => <I s={24} v={24}><path d="M6 1v12M0 7h12" stroke="#111" strokeWidth="1.3" /><path d="M6 0l2 3H4zM6 14l2-3H4zM0 7l3-2v4zM12 7L9 5v4z" fill="#111" /><MiniCursor x={12} y={7} /></I>;
const SBusy = () => <I s={20} v={20}><circle cx="10" cy="10" r="7" fill="none" stroke="#a8a8a8" strokeWidth="3.5" strokeDasharray="3.5 1.5" /></I>;
const SFilter = () => <I s={22} v={22}><path d="M1 2h20v3l-7 8v8h-6v-8L1 5z" fill="#dadcdf" stroke="#555" strokeWidth="1.2" /><path d="M2 5h18" stroke="#777" /></I>;
const sbar: Item[] = [
  { c: 1642, w: 24, n: <SLinks /> }, { c: 1672, w: 24, n: <SLayer /> }, { c: 1702, w: 24, n: <SPin /> }, { c: 1732, w: 24, n: <SFace /> },
  { c: 1762, w: 24, n: <SMove /> }, { c: 1792, w: 20, n: <SBusy /> }, { c: 1820, w: 22, n: <SFilter /> }, { c: 1838, w: 12, n: <FilterCount>:0</FilterCount> },
];

const Btn: React.FC<{ w: number; off?: boolean; icon: React.ReactNode; a: React.ReactNode; b?: React.ReactNode; caret?: number }> = ({ w, off, icon, a, b, caret }) => (
  <RButton $w={w} $off={off}>
    <IconWell>{icon}</IconWell>
    <RLabel>{a}{b ? <><br />{b}</> : null}</RLabel>
    {caret !== undefined && <SplitCaret $r={caret} />}
  </RButton>
);

export default function App() {
  return (
    <Page>
      <Global />
      <TitleBar>
        <IconRow>{spaced(qat)}</IconRow>
        <Title>Autodesk Revit 2020 - False Floor Grille - 3D View: {"{3D}"}</Title>
        <TitleRight><IconRow>{spaced(rightBar, 1470)}</IconRow></TitleRight>
      </TitleBar>
      <TabRow>
        <FileTab>File</FileTab>
        <RibbonTab $active>Create</RibbonTab>
        {["Insert", "Annotate", "View", "Manage", "Add-Ins", "Enscape™", "Modify"].map(t => <RibbonTab key={t}>{t}</RibbonTab>)}
        <TabTool><RibbonMini /><Caret $c="#222" /></TabTool>
      </TabRow>
      <Ribbon>
        <Panel $w={72}>
          <PanelBody><ModifyButton><CursorBig /><ModifyText>Modify</ModifyText></ModifyButton></PanelBody>
          <PanelLabel>Select <Caret /></PanelLabel>
        </Panel>
        <Panel $w={104}>
          <PanelBody>
            <SmallGrid>
              <SmallCell><PropsA /></SmallCell><SmallCell><FamType /></SmallCell>
              <SmallCell $on><PropDoc /></SmallCell><SmallCell><FamCat /></SmallCell>
            </SmallGrid>
          </PanelBody>
          <PanelLabel>Properties</PanelLabel>
        </Panel>
        <Panel $w={346}>
          <PanelBody $pad={4}>
            <Btn w={68} icon={<Extrusion />} a="Extrusion" />
            <Btn w={48} icon={<Blend />} a="Blend" />
            <Btn w={60} icon={<Revolve />} a="Revolve" />
            <Btn w={52} icon={<Sweep />} a="Sweep" />
            <Btn w={50} icon={<SweptBlend />} a="Swept" b="Blend" />
            <Btn w={62} icon={<VoidForms />} a="Void" b="Forms" caret={2} />
          </PanelBody>
          <PanelLabel>Forms</PanelLabel>
        </Panel>
        <Panel $w={325}>
          <PanelBody>
            <Btn w={58} icon={<ModelLine />} a="Model" b="Line" />
            <Btn w={76} icon={<Component />} a="Component" />
            <Btn w={62} icon={<ModelText />} a="Model" b="Text" />
            <Btn w={54} off icon={<Opening />} a="Opening" />
            <Btn w={76} icon={<ModelGroup />} a="Model" b="Group" caret={5} />
          </PanelBody>
          <PanelLabel>Model</PanelLabel>
        </Panel>
        <Panel $w={62}>
          <PanelBody><Btn w={61} off icon={<ControlI />} a="Control" /></PanelBody>
          <PanelLabel>Control</PanelLabel>
        </Panel>
        <Panel $w={387}>
          <PanelBody $pad={3}>
            <Btn w={76} icon={<Electrical />} a="Electrical" b="Connector" />
            <Btn w={76} icon={<Duct />} a="Duct" b="Connector" />
            <Btn w={76} icon={<Pipe />} a="Pipe" b="Connector" />
            <Btn w={76} icon={<CableTray />} a="Cable Tray" b="Connector" />
            <Btn w={76} icon={<Conduit />} a="Conduit" b="Connector" />
          </PanelBody>
          <PanelLabel>Connectors</PanelLabel>
        </Panel>
        <Panel $w={156}>
          <PanelBody $pad={5}>
            <Btn w={74} icon={<RefLine />} a="Reference" b="Line" />
            <Btn w={74} off icon={<RefPlane />} a="Reference" b="Plane" />
          </PanelBody>
          <PanelLabel>Datum</PanelLabel>
        </Panel>
        <Panel $w={157} $last>
          <PanelBody $pad={2}>
            <Btn w={50} icon={<SetWP />} a="Set" />
            <Btn w={48} icon={<ShowWP />} a="Show" />
            <Btn w={50} icon={<Viewer />} a="Viewer" />
          </PanelBody>
          <PanelLabel>Work Plane</PanelLabel>
        </Panel>
        <Panel $w={194} $last>
          <PanelBody>
            <Btn w={72} icon={<LoadProject />} a="Load into" b="Project" />
            <Btn w={118} icon={<LoadClose />} a="Load into" b="Project and Close" />
          </PanelBody>
          <PanelLabel $hl>Family Editor</PanelLabel>
        </Panel>
      </Ribbon>
      <RibbonGap />
      <Workspace>
        <PropsPanel>
          <DockHeader $pad={3}>Properties <DockClose /></DockHeader>
          <TypeSelector><Thumb><ThumbR /></Thumb><TypeCaret /></TypeSelector>
          <FamilyRow>
            <Combo>Family: Air Terminals <ChevronDown size={15} color="#555" /></Combo>
            <EditType><EditIcon /> Edit Type</EditType>
          </FamilyRow>
          <PropBody>
            {groups.map(g => (
              <React.Fragment key={g.head}>
                <GroupHead>{g.head}<DoubleUp /></GroupHead>
                {g.rows.map(r => (
                  <PropRow key={r.name}>
                    <PropName $off={r.off}>{r.name}</PropName>
                    <PropValue $sel={r.sel}>
                      {r.value}
                      {r.check !== undefined && <Check $on={r.check}>{r.check && <CheckMark />}</Check>}
                    </PropValue>
                  </PropRow>
                ))}
              </React.Fragment>
            ))}
          </PropBody>
          <PropFooter><HelpLink>Properties help</HelpLink><ApplyButton>Apply</ApplyButton></PropFooter>
        </PropsPanel>
        <ViewArea>
          <ViewTabs>
            <ViewTab $w={160}><PlanTab /><TabName>Ref. Level</TabName></ViewTab>
            <ViewTab $active $w={160}><HouseTab /><TabName $bold>{"{3D}"}</TabName><TabClose><DockClose /></TabClose></ViewTab>
            <TabsMenu><I s={12} v={12}><path d="M1 2h10" stroke="#444" strokeWidth="1.5" /><path d="M1 5h10l-5 6z" fill="#444" /></I></TabsMenu>
          </ViewTabs>
          <ViewBody>
            <CanvasColumn>
              <Canvas>
                <Grille />
                <ViewCube><CubeFace>TOP</CubeFace></ViewCube>
              </Canvas>
              <ViewBar>
                <ScaleText>1 : 100</ScaleText>
                <IconRow $h={22}>{spaced(bar)}</IconRow>
                <HThumb />
              </ViewBar>
            </CanvasColumn>
            <ScrollColumn><VThumb /><Grip><GripDots /></Grip></ScrollColumn>
          </ViewBody>
        </ViewArea>
        <BrowserPanel>
          <DockHeader $pad={1}>Project Browser - False Floor... <DockClose /></DockHeader>
          <Tree>
            <TreeLines width="236" height="380"><path d={treeLines} fill="none" stroke="#8c8c8c" strokeDasharray="1 1" transform="translate(.5 1.5)" /></TreeLines>
            <TreeRow $pad={4}><ExpBox><MinusI /></ExpBox><TreeIcon><TViews /></TreeIcon><TreeLabel $hl>Views (all)</TreeLabel></TreeRow>
            {[
              ["Floor Plans", ["Ref. Level"]],
              ["Ceiling Plans", ["Ref. Level"]],
              ["3D Views", ["View 1", "{3D}"]],
              ["Elevations (Elevation 1)", ["Back", "Front", "Left", "Right"]],
            ].map(([h, kids]) => (
              <React.Fragment key={h as string}>
                <TreeRow $pad={30}><ExpBox><MinusI /></ExpBox><TreeLabel $ml={12}>{h as string}</TreeLabel></TreeRow>
                {(kids as string[]).map(k => <TreeRow key={k + h} $pad={81}><TreeLabel $bold={k === "{3D}"}>{k}</TreeLabel></TreeRow>)}
              </React.Fragment>
            ))}
            <TreeRow $pad={4}><ExpSpace /><TreeIcon><TSheets /></TreeIcon><TreeLabel>Sheets (all)</TreeLabel></TreeRow>
            <TreeRow $pad={4}><ExpBox><PlusI /></ExpBox><TreeIcon><TFamilies /></TreeIcon><TreeLabel>Families</TreeLabel></TreeRow>
            <TreeRow $pad={4}><ExpBox><PlusI /></ExpBox><TreeIcon><TGroups /></TreeIcon><TreeLabel>Groups</TreeLabel></TreeRow>
            <TreeRow $pad={4}><ExpSpace /><TreeIcon><TLinks /></TreeIcon><TreeLabel>Revit Links</TreeLabel></TreeRow>
          </Tree>
        </BrowserPanel>
      </Workspace>
      <StatusBar>
        <StatusText>Click to select, TAB for alternates, CTRL adds, SHIFT unselects.</StatusText>
        <StatusRight>{spaced(sbar, 1620)}</StatusRight>
      </StatusBar>
    </Page>
  );
}
